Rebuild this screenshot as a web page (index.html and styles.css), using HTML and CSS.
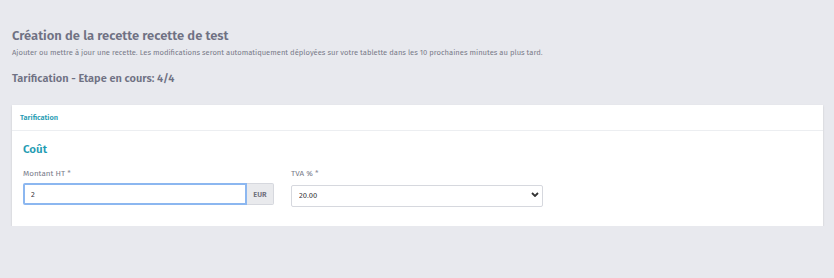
FILE: index.html
```html
<!DOCTYPE html>
<html lang="fr">
<head>
    <meta charset="UTF-8">
    <meta name="viewport" content="width=device-width, initial-scale=1.0">
    <title>Création de la recette</title>
    <link rel="stylesheet" href="styles.css">
</head>
<body>
    <div class="page">
        <div class="page-header">
            <h1 class="page-title">Création de la recette recette de test</h1>
            <p class="page-desc">Ajouter ou mettre à jour une recette. Les modifications seront automatiquement déployées sur votre tablette dans les 10 prochaines minutes au plus tard.</p>
            <h2 class="step-title">Tarification - Etape en cours: 4/4</h2>
        </div>

        <div class="card">
            <div class="card-header">Tarification</div>
            <div class="card-body">
                <h3 class="section-title">Coût</h3>
                <div class="form-row">
                    <div class="form-group group-amount">
                        <label for="amount">Montant HT *</label>
                        <div class="input-group">
                            <input type="text" id="amount" class="field focused" value="2">
                            <span class="addon">EUR</span>
                        </div>
                    </div>
                    <div class="form-group group-tva">
                        <label for="tva">TVA % *</label>
                        <div class="select-wrap">
                            <select id="tva" class="field">
                                <option>20.00</option>
                                <option>10.00</option>
                                <option>5.50</option>
                            </select>
                            <svg class="chevron" width="8" height="5" viewBox="0 0 8 5">
                                <path d="M1 1 L4 4 L7 1" fill="none" stroke="#333" stroke-width="1.8"/>
                            </svg>
                        </div>
                    </div>
                </div>
            </div>
        </div>
    </div>
</body>
</html>
```

FILE: styles.css
```css
body {
    margin: 0;
    font-family: "Fira Sans", "Open Sans", sans-serif;
    background-color: #e8e9ee;
    color: #6e7080;
}

.page {
    padding: 28px 11px 0 12px;
}

.page-title {
    margin: 0;
    font-size: 13px;
    font-weight: 600;
    line-height: 16px;
    color: #6f7183;
}

.page-desc {
    margin: 3px 0 0;
    font-size: 7.6px;
    line-height: 12px;
    color: #7a7c8a;
}

.step-title {
    margin: 12px 0 0;
    font-size: 11px;
    font-weight: 600;
    line-height: 16px;
    color: #6f7183;
}

.card {
    margin-top: 18px;
    background-color: #fff;
    box-shadow: 0 1px 2px rgba(0, 0, 0, 0.15);
}

.card-header {
    height: 25px;
    padding: 0 8px;
    display: flex;
    align-items: center;
    font-size: 7.4px;
    font-weight: 600;
    color: #1f9cb3;
    border-bottom: 1px solid #eceef1;
}

.card-body {
    padding: 10px 11px 19px;
}

.section-title {
    margin: 0;
    font-size: 11.5px;
    font-weight: 600;
    line-height: 16px;
    color: #1f9cb3;
}

.form-row {
    margin-top: 12px;
    display: flex;
    gap: 17px;
}

.form-group label {
    display: block;
    font-size: 8px;
    line-height: 10px;
    color: #7a7c8a;
    margin-bottom: 4px;
}

.group-amount {
    width: 251px;
}

.group-tva {
    width: 252px;
}

.input-group {
    display: flex;
}

.field {
    box-sizing: border-box;
    height: 22px;
    font-family: inherit;
    font-size: 7.6px;
    color: #333;
    border: 1px solid #d6d8de;
    border-radius: 2px;
    background-color: #fff;
    padding: 0 7px;
    outline: none;
}

.input-group .field {
    flex: 1;
    min-width: 0;
    border-radius: 2px 0 0 2px;
}

.field.focused {
    border: 2px solid #8cb7f0;
    padding: 0 6px;
}

.addon {
    box-sizing: border-box;
    width: 27px;
    height: 22px;
    display: flex;
    align-items: center;
    justify-content: center;
    font-size: 7.4px;
    font-weight: 600;
    color: #6c6e7a;
    background-color: #e9eaed;
    border: 1px solid #d6d8de;
    border-left: none;
    border-radius: 0 2px 2px 0;
}

.select-wrap {
    position: relative;
}

.select-wrap select {
    width: 100%;
    appearance: none;
    -webkit-appearance: none;
}

.chevron {
    position: absolute;
    right: 4px;
    top: 9px;
    pointer-events: none;
}
```
